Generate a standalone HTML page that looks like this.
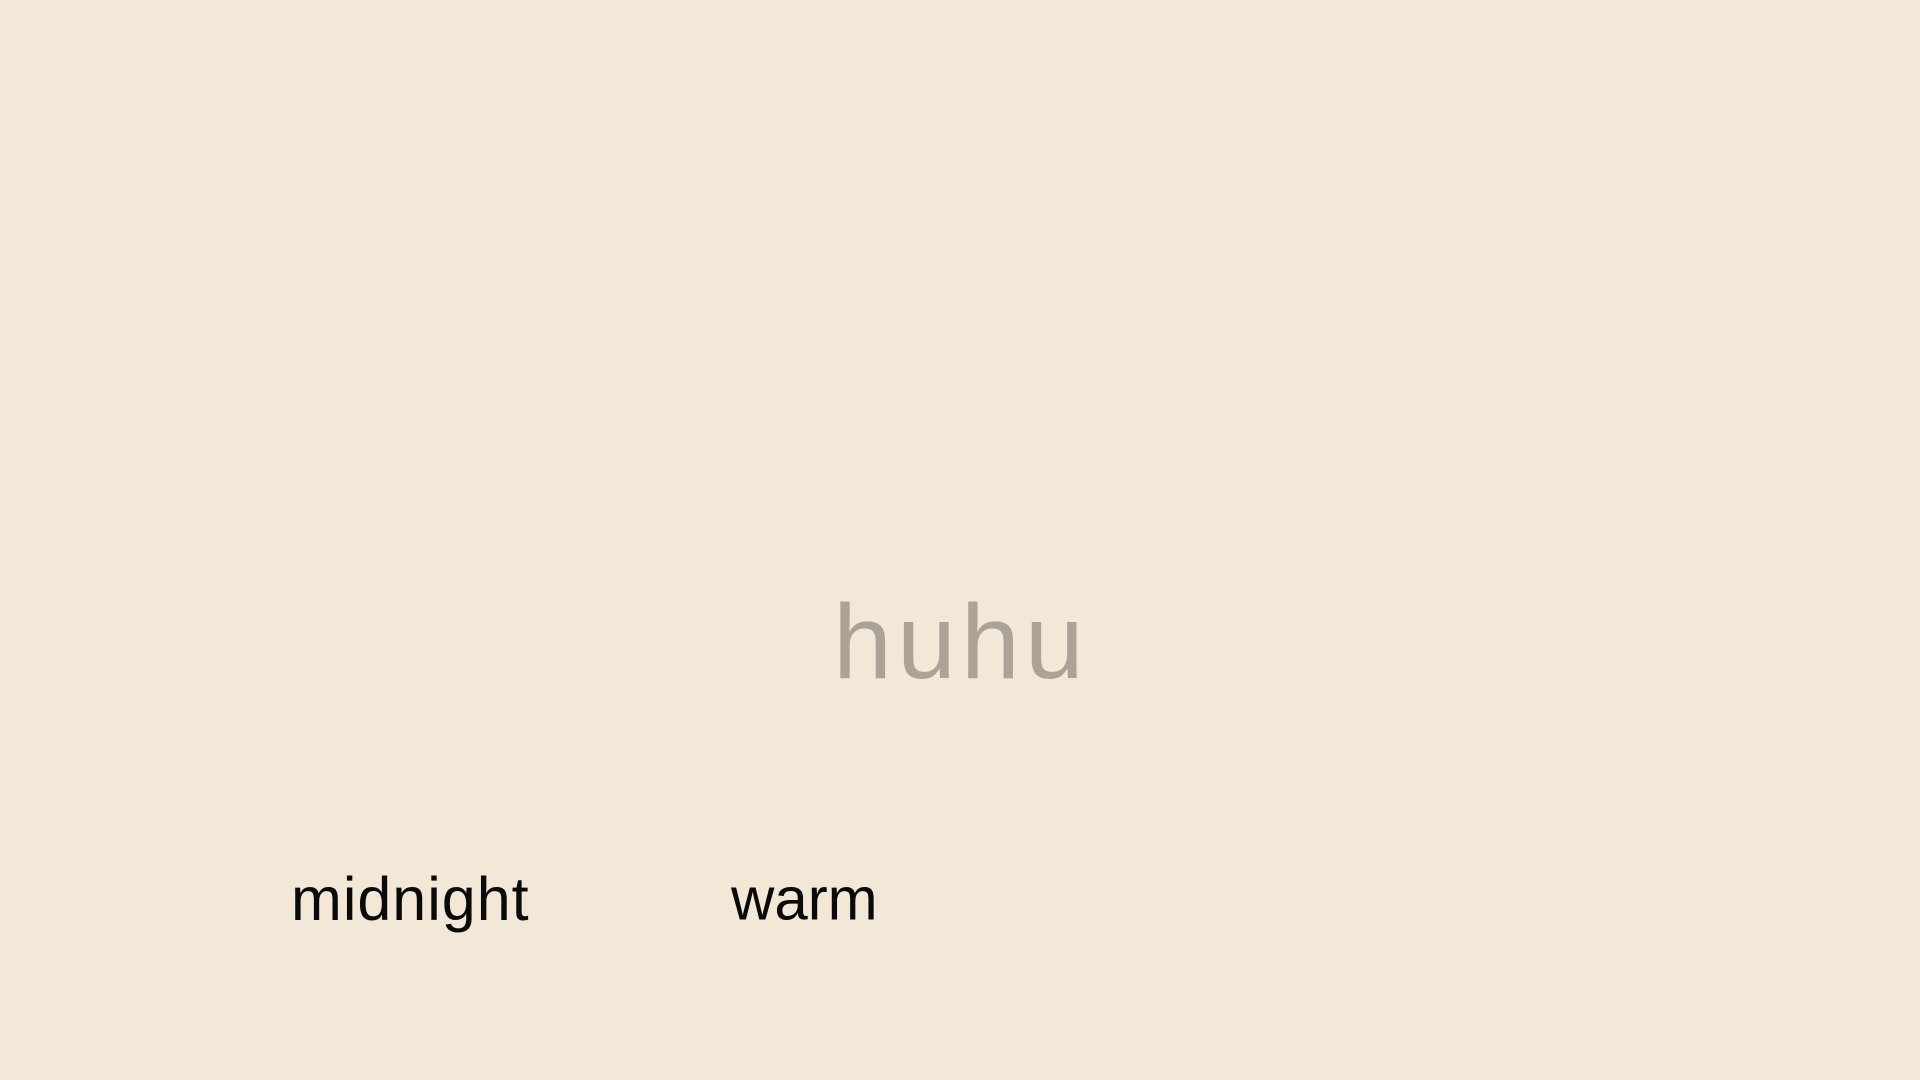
<!DOCTYPE html>
<html><head><meta charset="utf-8"><style>
html,body{margin:0;padding:0;width:1920px;height:1080px;background:#f3e7d7;overflow:hidden;font-family:"Liberation Sans",sans-serif;}
.t{position:absolute;white-space:nowrap;line-height:1;}
</style></head><body>
<div class="t" style="left:833px;top:685px;font-size:106px;letter-spacing:5px;color:#aca398;font-weight:bold;-webkit-text-stroke:0;font-weight:normal;">
</div>
<div class="t" style="left:833px;top:685px;font-size:106px;letter-spacing:5px;color:#aca398;transform:translateY(-0.905em);">huhu</div>
<div class="t" style="left:291px;top:924px;font-size:61px;letter-spacing:1px;color:#0a0a0a;transform:translateY(-0.905em);">midnight</div>
<div class="t" style="left:731px;top:924px;font-size:60px;color:#0a0a0a;transform:translateY(-0.905em);">warm</div>
</body></html>
